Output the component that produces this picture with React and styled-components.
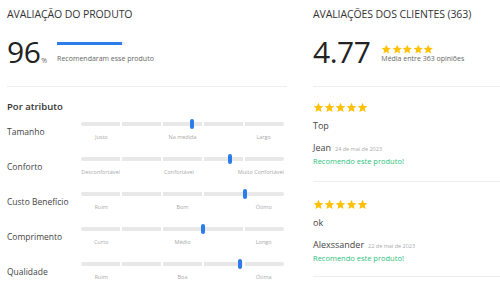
import React from 'react';
import styled, {createGlobalStyle} from "styled-components";

const GlobalStyle = createGlobalStyle`
  html, body {
    margin: 0;
    padding: 0;
    background: #fff;
  }
  body {
    font-family: "Open Sans", "Noto Sans", sans-serif;
    color: #333;
    height: 281px;
    overflow: hidden;
  }
`

const Page = styled.div`
  display: flex;
  align-items: flex-start;
  width: 500px;
  height: 281px;
  overflow: hidden;
  gap: 26px;
  padding-left: 7px;
  box-sizing: border-box;
`

const Column = styled.div`
  display: flex;
  flex-direction: column;
  width: ${props => props.width}px;
  flex-shrink: 0;

  & > * {
    flex-shrink: 0;
  }
`

const Heading = styled.div`
  font-size: 10.5px;
  line-height: 14px;
  margin-top: 7px;
  color: #333;
  letter-spacing: -0.1px;
`

const Summary = styled.div`
  display: flex;
  align-items: flex-end;
  height: 66px;
  box-sizing: border-box;
  padding-bottom: 21px;
  border-bottom: 1px solid #eee;
`

const BigNumber = styled.div`
  font-size: 30px;
  line-height: 26px;
  color: #222;
  letter-spacing: -0.5px;
`

const Percent = styled.span`
  font-size: 7px;
  line-height: 7px;
  color: #666;
  margin-left: 1px;
  margin-bottom: 1px;
`

const RecommendBox = styled.div`
  display: flex;
  flex-direction: column;
  margin-left: 10px;
  margin-bottom: 2px;
`

const Bar = styled.div`
  width: 68px;
  height: 3px;
  background: #eee;
  margin-bottom: 9px;
`

const BarFill = styled.div`
  height: 100%;
  background: #2b7de9;
`

const SmallText = styled.div`
  font-size: 7px;
  line-height: 9px;
  color: #666;
`

const SectionTitle = styled.div`
  font-size: 9.5px;
  font-weight: 600;
  line-height: 12px;
  color: #333;
  margin-top: 14px;
  margin-bottom: 9px;
`

const AttrRow = styled.div`
  display: flex;
  height: 35px;
`

const AttrLabel = styled.div`
  width: 74px;
  flex-shrink: 0;
  font-size: 8.5px;
  line-height: 12px;
  color: #444;
  padding-top: 4px;
`

const Scale = styled.div`
  position: relative;
  width: 203px;
`

const Track = styled.div`
  display: grid;
  grid-template-columns: repeat(5, 1fr);
  gap: 2px;
  height: 4px;
`

const Segment = styled.div`
  background: #e8e8e8;
  border-radius: ${props => props.$first ? '2px 0 0 2px' : props.$last ? '0 2px 2px 0' : '0'};
`

const Thumb = styled.div`
  position: absolute;
  top: -3px;
  width: 4px;
  height: 10px;
  margin-left: -2px;
  border-radius: 2px;
  background: #2b7de9;
`

const ScaleLabels = styled.div`
  display: grid;
  grid-template-columns: repeat(5, 1fr);
  margin-top: 8px;
  font-size: 5.5px;
  line-height: 7px;
  color: #aaa;
  white-space: nowrap;
`

const ScaleLabel = styled.div`
  grid-column: ${props => props.$col};
  display: flex;
  justify-content: center;
`

const Stars = styled.div`
  display: flex;
`

const ScoreInfo = styled.div`
  display: flex;
  flex-direction: column;
  margin-left: 11px;
  margin-bottom: 2px;
`

const Review = styled.div`
  display: flex;
  flex-direction: column;
  height: 95px;
  box-sizing: border-box;
  padding-top: ${props => props.$top}px;
  border-bottom: 1px solid #eee;
`

const ReviewText = styled.div`
  font-size: 9px;
  line-height: 12px;
  color: #444;
  margin-top: 7px;
`

const Author = styled.div`
  display: flex;
  align-items: baseline;
  margin-top: 10px;
  font-size: 9px;
  line-height: 12px;
  color: #444;
`

const DateText = styled.span`
  font-size: 5.5px;
  color: #aaa;
  margin-left: 4px;
`

const Recommend = styled.div`
  font-size: 7.5px;
  line-height: 11px;
  color: #2ec27e;
  margin-top: 1px;
`

function Star({size}) {
    return (
        <svg width={size} height={size} viewBox="0 0 24 24">
            <path fill="#ffc107"
                  d="M12 1.8l3.1 6.9 7.4.7-5.6 5 1.7 7.3L12 17.9l-6.6 3.8 1.7-7.3-5.6-5 7.4-.7z"/>
        </svg>
    );
}

function StarRow({size}) {
    return (
        <Stars>
            {[0, 1, 2, 3, 4].map(i => <Star key={i} size={size}/>)}
        </Stars>
    );
}

const attributes = [
    {name: 'Tamanho', value: 0.545, labels: ['Justo', 'Na medida', 'Largo']},
    {name: 'Conforto', value: 0.735, labels: ['Desconfortável', 'Confortável', 'Muito Confortável']},
    {name: 'Custo Benefício', value: 0.808, labels: ['Ruim', 'Bom', 'Ótimo']},
    {name: 'Comprimento', value: 0.601, labels: ['Curto', 'Médio', 'Longo']},
    {name: 'Qualidade', value: 0.783, labels: ['Ruim', 'Boa', 'Ótima']},
];

const reviews = [
    {text: 'Top', author: 'Jean', date: '24 de mai de 2023', top: 15},
    {text: 'ok', author: 'Alexssander', date: '22 de mai de 2023', top: 17},
];

function Attribute({item}) {
    return (
        <AttrRow>
            <AttrLabel>{item.name}</AttrLabel>
            <Scale>
                <Track>
                    {[0, 1, 2, 3, 4].map(i => <Segment key={i} $first={i === 0} $last={i === 4}/>)}
                </Track>
                <Thumb style={{left: `${item.value * 100}%`}}/>
                <ScaleLabels>
                    <ScaleLabel $col={1}>{item.labels[0]}</ScaleLabel>
                    <ScaleLabel $col={3}>{item.labels[1]}</ScaleLabel>
                    <ScaleLabel $col={5}>{item.labels[2]}</ScaleLabel>
                </ScaleLabels>
            </Scale>
        </AttrRow>
    );
}

function App() {
    return (
        <>
            <GlobalStyle/>
            <Page>
                <Column width={280}>
                    <Heading>AVALIAÇÃO DO PRODUTO</Heading>
                    <Summary>
                        <BigNumber>96</BigNumber>
                        <Percent>%</Percent>
                        <RecommendBox>
                            <Bar><BarFill style={{width: '96%'}}/></Bar>
                            <SmallText>Recomendaram esse produto</SmallText>
                        </RecommendBox>
                    </Summary>
                    <SectionTitle>Por atributo</SectionTitle>
                    {attributes.map(a => <Attribute key={a.name} item={a}/>)}
                </Column>
                <Column width={190}>
                    <Heading>AVALIAÇÕES DOS CLIENTES (363)</Heading>
                    <Summary>
                        <BigNumber>4.77</BigNumber>
                        <ScoreInfo>
                            <StarRow size={10.5}/>
                            <SmallText>Média entre 363 opiniões</SmallText>
                        </ScoreInfo>
                    </Summary>
                    {reviews.map(r => (
                        <Review key={r.author} $top={r.top}>
                            <StarRow size={11}/>
                            <ReviewText>{r.text}</ReviewText>
                            <Author>{r.author}<DateText>{r.date}</DateText></Author>
                            <Recommend>Recomendo este produto!</Recommend>
                        </Review>
                    ))}
                </Column>
            </Page>
        </>
    );
}

export default App;
